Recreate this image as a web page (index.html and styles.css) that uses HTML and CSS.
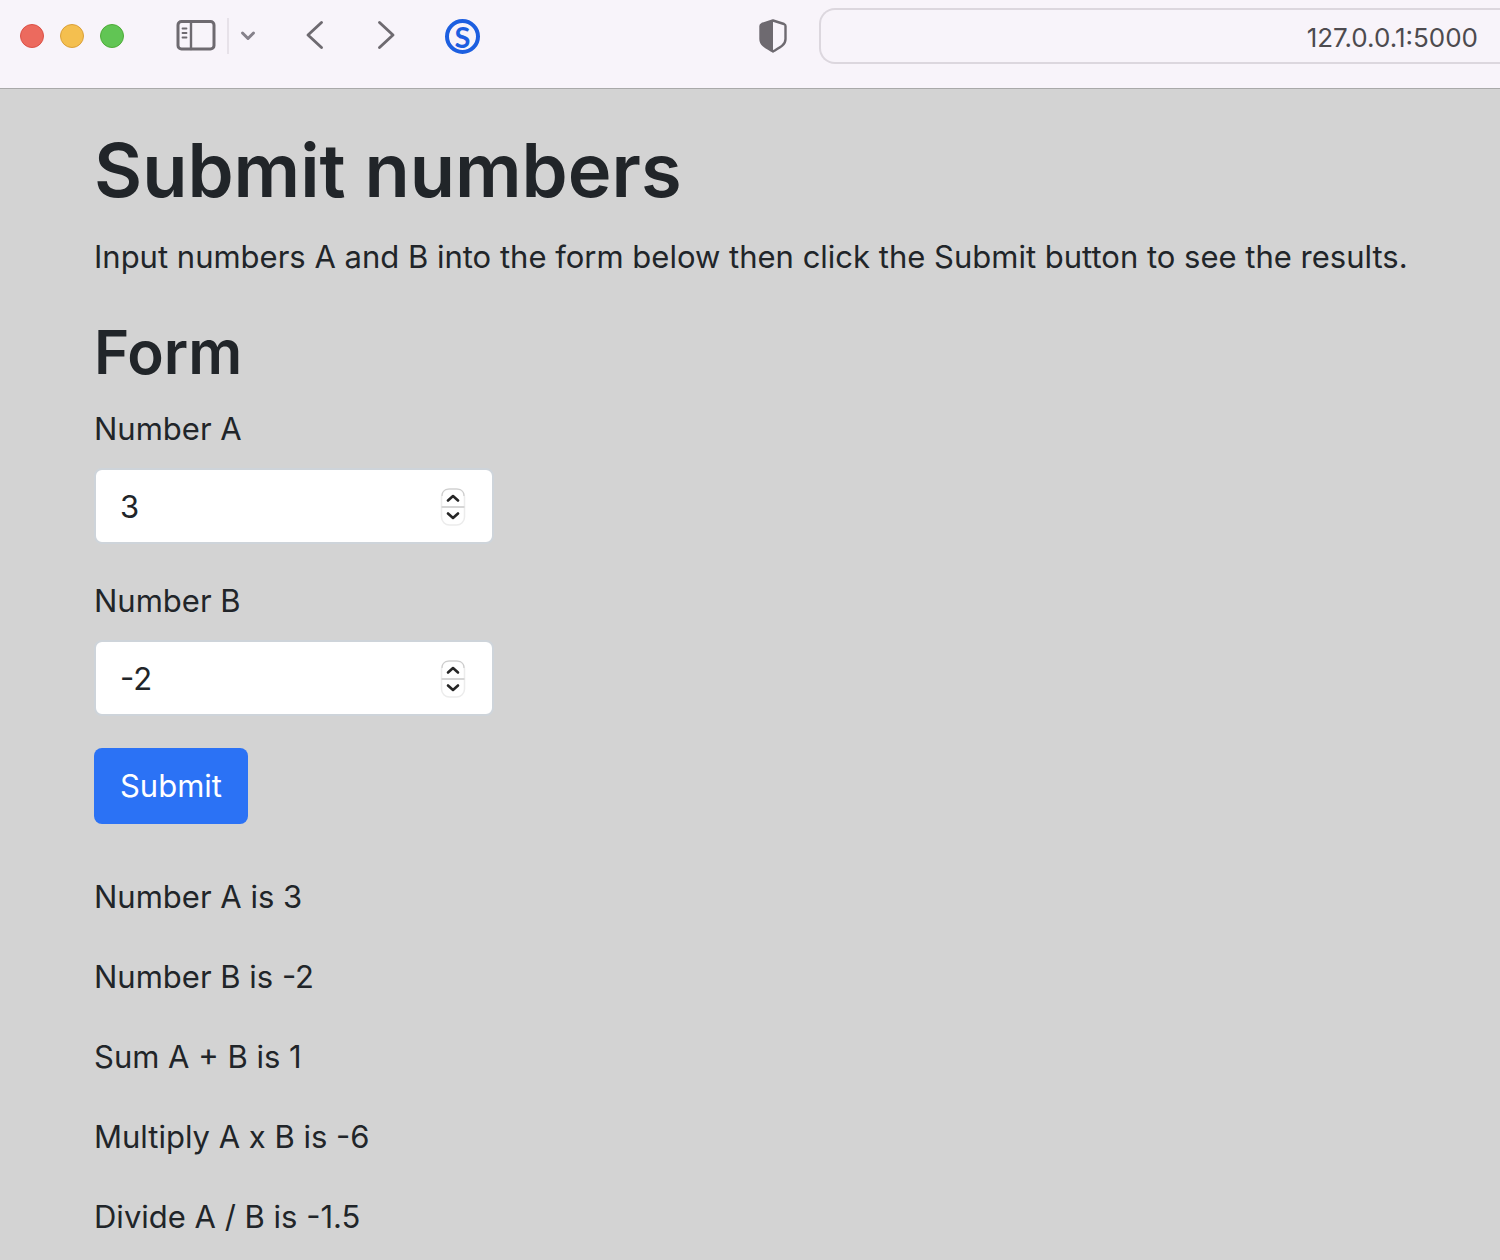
FILE: index.html
```
<!DOCTYPE html>
<html lang="en">
<head>
<meta charset="utf-8">
<title>Submit numbers</title>
<link rel="stylesheet" href="styles.css">
</head>
<body>
<header class="toolbar">
  <div class="lights">
    <button class="light red" type="button" aria-label="Close"></button>
    <button class="light yellow" type="button" aria-label="Minimize"></button>
    <button class="light green" type="button" aria-label="Zoom"></button>
  </div>
  <div class="sidebar-tools">
    <button class="tool" type="button" aria-label="Sidebar">
      <svg width="40" height="32" viewBox="0 0 40 32" fill="none" stroke="#6e6a70" stroke-linecap="round"><rect x="2" y="1.500" width="36" height="27.500" rx="3.500" stroke-width="3"/><path d="M15 2v27" stroke-width="2.400"/><path d="M6.500 8.500h4M6.500 13h4M6.500 17.500h4" stroke-width="1.800"/></svg>
    </button>
    <span class="divider"></span>
    <button class="tool" type="button" aria-label="Tab groups">
      <svg width="16" height="12" viewBox="0 0 16 12" fill="none" stroke="#85818a" stroke-width="3" stroke-linecap="round" stroke-linejoin="round"><path d="M2.500 3L8 8.500 13.500 3"/></svg>
    </button>
  </div>
  <div class="history">
    <button class="tool" type="button" aria-label="Back">
      <svg width="20" height="32" viewBox="0 0 20 32" fill="none" stroke="#6e6a70" stroke-width="2.900" stroke-linecap="round" stroke-linejoin="round"><path d="M16.500 2.500L3 15l13.500 12.500"/></svg>
    </button>
    <button class="tool" type="button" aria-label="Forward">
      <svg width="20" height="32" viewBox="0 0 20 32" fill="none" stroke="#6e6a70" stroke-width="2.900" stroke-linecap="round" stroke-linejoin="round"><path d="M3.500 2.500L17 15 3.500 27.500"/></svg>
    </button>
  </div>
  <button class="extension" type="button">S</button>
  <button class="tool privacy" type="button" aria-label="Privacy report">
    <svg width="28" height="34" viewBox="0 0 28 34"><path d="M14 1.500L25 5q1.500.600 1.500 2v13c0 6-5.500 8.500-12.500 12.500C7 28.500 1.500 26 1.500 20V7q0-1.400 1.500-2z" fill="none" stroke="#6e6a70" stroke-width="2.400" stroke-linejoin="round"/><path d="M14 1.500L3 5Q1.500 5.600 1.500 7v13c0 6 5.500 8.500 12.500 12.500z" fill="#6e6a70"/></svg>
  </button>
  <input class="address" type="text" aria-label="Address" value="127.0.0.1:5000">
</header>
<main class="page">
  <h1 class="title">Submit numbers</h1>
  <p class="intro">Input numbers A and B into the form below then click the Submit button to see the results.</p>
  <h2 class="subtitle">Form</h2>
  <form class="form">
    <div class="field">
      <label class="label" for="a">Number A</label>
      <div class="control">
        <input class="number" id="a" type="number" value="3">
        <svg class="stepper" viewBox="0 0 28 40" aria-hidden="true"><use href="#steps"/></svg>
      </div>
    </div>
    <div class="field">
      <label class="label" for="b">Number B</label>
      <div class="control">
        <input class="number" id="b" type="number" value="-2">
        <svg class="stepper" viewBox="0 0 28 40" aria-hidden="true"><use href="#steps"/></svg>
      </div>
    </div>
    <button class="submit" type="submit">Submit</button>
  </form>
  <div class="results">
    <p>Number A is 3</p>
    <p>Number B is -2</p>
    <p>Sum A + B is 1</p>
    <p>Multiply A x B is -6</p>
    <p>Divide A / B is -1.5</p>
  </div>
</main>
<svg class="symbols" aria-hidden="true">
  <symbol id="steps" viewBox="0 0 28 40">
    <rect x="2.500" y="2" width="23" height="36" rx="8" fill="#fff" stroke="#ececec" stroke-width="1.500"/>
    <path d="M3 9q0-7 7-7h8q7 0 7 7" fill="none" stroke="#c9c9c9"/>
    <path d="M2.500 20h23" stroke="#d6d6d6" stroke-width="2"/>
    <path d="M9 13.500l5-4.500 5 4.500M9 26.500l5 4.500 5-4.500" fill="none" stroke="#262626" stroke-width="2.600" stroke-linecap="round" stroke-linejoin="round"/>
  </symbol>
</svg>
</body>
</html>
```
FILE: styles.css
```
* {
  box-sizing: border-box;
}

body {
  margin: 0;
  background: #d3d3d3;
  color: #212529;
  font: 31px/48px Inter, "Liberation Sans", sans-serif;
}

button {
  padding: 0;
  border: 0;
  background: none;
  font: inherit;
}

.toolbar {
  display: flex;
  align-items: center;
  height: 89px;
  padding: 0 0 16px 20px;
  border-bottom: 1px solid #a9a9a9;
  background: #f8f4fa;
}

.lights {
  display: flex;
  gap: 16px;
}

.light {
  width: 24px;
  height: 24px;
  border: 1px solid;
  border-radius: 50%;
}

.red {
  border-color: #dc5147;
  background: #ec6a5e;
}

.yellow {
  border-color: #dba039;
  background: #f4bf4f;
}

.green {
  border-color: #4eac38;
  background: #61c554;
}

.tool {
  display: flex;
}

.sidebar-tools {
  display: flex;
  align-items: center;
  gap: 11px;
  margin-left: 52px;
}

.divider {
  width: 2px;
  height: 36px;
  background: #e7e2e9;
}

.history {
  display: flex;
  gap: 51px;
  margin-left: 49px;
}

.extension {
  width: 35px;
  height: 35px;
  margin-left: 49px;
  border: 4px solid #1d5fe0;
  border-radius: 50%;
  color: #1d5fe0;
  font: 700 29px/25px Lato, sans-serif;
}

.privacy {
  margin-left: 279px;
}

.address {
  flex: 1;
  min-width: 0;
  height: 56px;
  margin-left: 32px;
  padding: 2px 22px 0;
  border: 2px solid #dcd7de;
  border-right: 0;
  border-radius: 16px 0 0 16px;
  background: transparent;
  color: #4d4b4f;
  font: 26px/32px Inter, sans-serif;
  text-align: right;
}

.page {
  padding: 33px 88px 16px 94px;
}

.title,
.subtitle,
.intro {
  margin: 0;
}

.title {
  margin-bottom: 15px;
  font-size: 74px;
  font-weight: 600;
  line-height: 96px;
}

.intro {
  margin-bottom: 33px;
}

.subtitle {
  margin-bottom: 13px;
  font-size: 60px;
  font-weight: 600;
  line-height: 77px;
}

.form {
  display: flex;
  flex-direction: column;
  align-items: flex-start;
  gap: 32px;
}

.field {
  display: flex;
  flex-direction: column;
  gap: 15px;
}

.label {
  padding-top: 1px;
}

.control {
  position: relative;
  width: 400px;
}

.number {
  display: block;
  width: 100%;
  height: 76px;
  padding: 0 64px 0 24px;
  border: 2px solid #ced4da;
  border-radius: 8px;
  background: #fff;
  color: inherit;
  font: inherit;
  appearance: textfield;
}

.stepper {
  position: absolute;
  top: 19px;
  right: 27px;
  width: 28px;
  height: 40px;
  pointer-events: none;
}

.submit {
  width: 154px;
  height: 76px;
  border-radius: 8px;
  background: #2b72f5;
  color: #fff;
}

.results {
  display: flex;
  flex-direction: column;
  gap: 32px;
  margin-top: 49px;
}

.results p {
  margin: 0;
}

.symbols {
  display: none;
}
```
